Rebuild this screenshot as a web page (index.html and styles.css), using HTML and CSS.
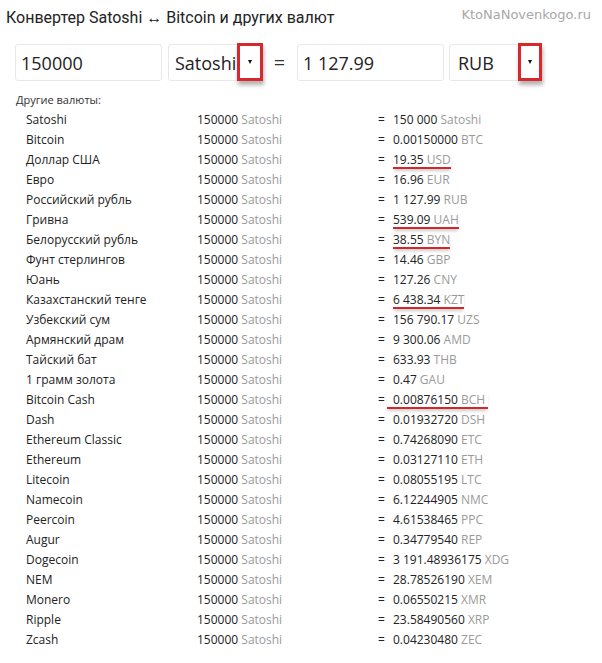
FILE: index.html
```html
<!DOCTYPE html>
<html lang="ru">
<head>
    <meta charset="UTF-8">
    <title>Конвертер Satoshi</title>
    <link rel="stylesheet" href="styles.css">
</head>
<body>
    <div class="header">
        <h1 class="title">Конвертер Satoshi ↔ Bitcoin и других валют</h1>
        <div class="site">KtoNaNovenkogo.ru</div>
    </div>

    <div class="converter">
        <input class="field" type="text" value="150000">
        <div class="select sel-from">
            <span>Satoshi</span>
            <span class="mark"><span class="arrow"></span></span>
        </div>
        <div class="equals">=</div>
        <input class="field" type="text" value="1 127.99">
        <div class="select sel-to">
            <span>RUB</span>
            <span class="mark"><span class="arrow"></span></span>
        </div>
    </div>

    <div class="others">Другие валюты:</div>

    <div class="rates">
        <div class="row"><span>Satoshi</span><span>150000 <i>Satoshi</i></span><span>=</span><span>150 000 <i>Satoshi</i></span></div>
        <div class="row"><span>Bitcoin</span><span>150000 <i>Satoshi</i></span><span>=</span><span>0.00150000 <i>BTC</i></span></div>
        <div class="row"><span>Доллар США</span><span>150000 <i>Satoshi</i></span><span>=</span><span><b class="hl">19.35 <i>USD</i></b></span></div>
        <div class="row"><span>Евро</span><span>150000 <i>Satoshi</i></span><span>=</span><span>16.96 <i>EUR</i></span></div>
        <div class="row"><span>Российский рубль</span><span>150000 <i>Satoshi</i></span><span>=</span><span>1 127.99 <i>RUB</i></span></div>
        <div class="row"><span>Гривна</span><span>150000 <i>Satoshi</i></span><span>=</span><span><b class="hl">539.09 <i>UAH</i></b></span></div>
        <div class="row"><span>Белорусский рубль</span><span>150000 <i>Satoshi</i></span><span>=</span><span><b class="hl">38.55 <i>BYN</i></b></span></div>
        <div class="row"><span>Фунт стерлингов</span><span>150000 <i>Satoshi</i></span><span>=</span><span>14.46 <i>GBP</i></span></div>
        <div class="row"><span>Юань</span><span>150000 <i>Satoshi</i></span><span>=</span><span>127.26 <i>CNY</i></span></div>
        <div class="row"><span>Казахстанский тенге</span><span>150000 <i>Satoshi</i></span><span>=</span><span><b class="hl">6 438.34 <i>KZT</i></b></span></div>
        <div class="row"><span>Узбекский сум</span><span>150000 <i>Satoshi</i></span><span>=</span><span>156 790.17 <i>UZS</i></span></div>
        <div class="row"><span>Армянский драм</span><span>150000 <i>Satoshi</i></span><span>=</span><span>9 300.06 <i>AMD</i></span></div>
        <div class="row"><span>Тайский бат</span><span>150000 <i>Satoshi</i></span><span>=</span><span>633.93 <i>THB</i></span></div>
        <div class="row"><span>1 грамм золота</span><span>150000 <i>Satoshi</i></span><span>=</span><span>0.47 <i>GAU</i></span></div>
        <div class="row"><span>Bitcoin Cash</span><span>150000 <i>Satoshi</i></span><span>=</span><span><b class="hl wide">0.00876150 <i>BCH</i></b></span></div>
        <div class="row"><span>Dash</span><span>150000 <i>Satoshi</i></span><span>=</span><span>0.01932720 <i>DSH</i></span></div>
        <div class="row"><span>Ethereum Classic</span><span>150000 <i>Satoshi</i></span><span>=</span><span>0.74268090 <i>ETC</i></span></div>
        <div class="row"><span>Ethereum</span><span>150000 <i>Satoshi</i></span><span>=</span><span>0.03127110 <i>ETH</i></span></div>
        <div class="row"><span>Litecoin</span><span>150000 <i>Satoshi</i></span><span>=</span><span>0.08055195 <i>LTC</i></span></div>
        <div class="row"><span>Namecoin</span><span>150000 <i>Satoshi</i></span><span>=</span><span>6.12244905 <i>NMC</i></span></div>
        <div class="row"><span>Peercoin</span><span>150000 <i>Satoshi</i></span><span>=</span><span>4.61538465 <i>PPC</i></span></div>
        <div class="row"><span>Augur</span><span>150000 <i>Satoshi</i></span><span>=</span><span>0.34779540 <i>REP</i></span></div>
        <div class="row"><span>Dogecoin</span><span>150000 <i>Satoshi</i></span><span>=</span><span>3 191.48936175 <i>XDG</i></span></div>
        <div class="row"><span>NEM</span><span>150000 <i>Satoshi</i></span><span>=</span><span>28.78526190 <i>XEM</i></span></div>
        <div class="row"><span>Monero</span><span>150000 <i>Satoshi</i></span><span>=</span><span>0.06550215 <i>XMR</i></span></div>
        <div class="row"><span>Ripple</span><span>150000 <i>Satoshi</i></span><span>=</span><span>23.58490560 <i>XRP</i></span></div>
        <div class="row"><span>Zcash</span><span>150000 <i>Satoshi</i></span><span>=</span><span>0.04230480 <i>ZEC</i></span></div>
    </div>
</body>
</html>
```

FILE: styles.css
```css
body {
    margin: 0;
    background-color: #fff;
    color: #222;
    font-family: 'Open Sans', 'DejaVu Sans', sans-serif;
}
.header {
    display: flex;
    justify-content: space-between;
    align-items: flex-start;
    height: 36px;
    padding: 0 11px 0 6px;
}
.title {
    margin: 7px 0 0;
    font-family: Roboto, 'Liberation Sans', sans-serif;
    font-size: 16px;
    font-weight: normal;
    line-height: 22px;
    color: #222;
}
.site {
    margin-top: 6px;
    font-family: 'DejaVu Sans', sans-serif;
    font-size: 13px;
    line-height: 18px;
    color: #a8a8a8;
}
.converter {
    display: flex;
    align-items: center;
    height: 37px;
    margin-top: 8px;
    padding-left: 15px;
}
.field, .select {
    box-sizing: border-box;
    height: 37px;
    border: 1px solid #e8e8e8;
    border-radius: 3px;
    background-color: #fff;
    font-family: 'Open Sans', sans-serif;
    font-size: 18px;
    color: #222;
}
.field {
    width: 147px;
    padding: 0 5px;
    outline: none;
}
.select {
    position: relative;
    display: flex;
    align-items: center;
    margin-left: 6px;
    padding-left: 6px;
}
.sel-from {
    width: 94px;
}
.sel-to {
    width: 92px;
    margin-left: 5px;
    padding-left: 8px;
}
.equals {
    width: 35px;
    text-align: center;
    font-size: 20px;
    color: #333;
}
.mark {
    position: absolute;
    top: -2px;
    left: 68px;
    box-sizing: border-box;
    width: 26px;
    height: 38px;
    border: 3px solid #d8282c;
    box-shadow: 1px 4px 4px rgba(0, 0, 0, 0.3);
    display: flex;
    align-items: center;
    justify-content: center;
}
.sel-to .mark {
    width: 24px;
}
.arrow {
    width: 0;
    height: 0;
    border-left: 2.5px solid transparent;
    border-right: 2.5px solid transparent;
    border-top: 4px solid #111;
}
.others {
    margin: 11px 0 0 16px;
    font-size: 11px;
    line-height: 16px;
    color: #333;
}
.rates {
    padding: 2px 0 0 26px;
}
.row {
    display: grid;
    grid-template-columns: 171px 181px 15px auto;
    height: 20px;
    align-items: center;
    font-size: 12px;
    line-height: 16px;
    color: #222;
}
.row i {
    font-style: normal;
    color: #9a9a9a;
}
.hl {
    font-weight: normal;
    display: inline-block;
    line-height: 15px;
    border-bottom: 2px solid #d4262b;
    box-shadow: 0 3px 3px -1px rgba(0, 0, 0, 0.2);
}
.hl.wide {
    margin-left: -6px;
    padding: 0 3px 0 6px;
}
```
